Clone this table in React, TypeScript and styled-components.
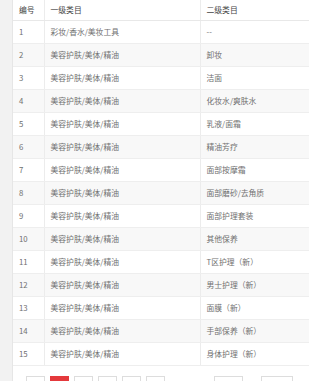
import React from "react";
import styled, { createGlobalStyle } from "styled-components";

const Global = createGlobalStyle`
  html, body { margin: 0; padding: 0; background: #f2f2f2; }
  body { font-family: "Noto Sans CJK SC", "Noto Sans", sans-serif; overflow: hidden; }
`;

const Page = styled.div`
  width: 309px;
  height: 381px;
  display: flex;
  overflow: hidden;
`;

const Panel = styled.div`
  margin-left: 12px;
  flex: 1;
  background: #fff;
  border-left: 1px solid #e6e6e6;
  display: flex;
  flex-direction: column;
`;

const Table = styled.table`
  width: 100%;
  border-collapse: collapse;
  table-layout: fixed;
  font-size: 7.8px;
`;

const HeadCell = styled.th<{ $w?: number }>`
  ${(p) => (p.$w ? `width: ${p.$w}px;` : "")}
  height: 20px;
  padding: 0 0 0 6px;
  text-align: left;
  font-weight: normal;
  color: #444;
  border-bottom: 1px solid #e8e8e8;
  border-right: 1px solid #ececec;
  &:last-child { border-right: none; }
  box-sizing: border-box;
`;

const Row = styled.tr<{ $alt: boolean }>`
  background: ${(p) => (p.$alt ? "#f8f8f8" : "#fff")};
`;

const Cell = styled.td`
  height: 23px;
  padding: 0 0 0 6px;
  color: #707070;
  border-bottom: 1px solid #eeeeee;
  border-right: 1px solid #ececec;
  &:last-child { border-right: none; }
  white-space: nowrap;
  box-sizing: border-box;
`;

const Pager = styled.div`
  display: flex;
  align-items: flex-start;
  padding: 10px 0 0 13px;
  gap: 5px;
`;

const PageBtn = styled.div<{ $active?: boolean; $w?: number }>`
  width: ${(p) => p.$w ?? 19}px;
  height: 16px;
  box-sizing: border-box;
  border: 1px solid ${(p) => (p.$active ? "#e4393c" : "#dddddd")};
  background: ${(p) => (p.$active ? "#e4393c" : "#fff")};
  color: ${(p) => (p.$active ? "#fff" : "#666")};
  font-size: 7px;
  display: flex;
  align-items: center;
  justify-content: center;
`;

const Spacer = styled.div<{ $w: number }>`
  width: ${(p) => p.$w}px;
`;

const rows: [string, string][] = [
  ["彩妆/香水/美妆工具", "--"],
  ["美容护肤/美体/精油", "卸妆"],
  ["美容护肤/美体/精油", "洁面"],
  ["美容护肤/美体/精油", "化妆水/爽肤水"],
  ["美容护肤/美体/精油", "乳液/面霜"],
  ["美容护肤/美体/精油", "精油芳疗"],
  ["美容护肤/美体/精油", "面部按摩霜"],
  ["美容护肤/美体/精油", "面部磨砂/去角质"],
  ["美容护肤/美体/精油", "面部护理套装"],
  ["美容护肤/美体/精油", "其他保养"],
  ["美容护肤/美体/精油", "T区护理（新）"],
  ["美容护肤/美体/精油", "男士护理（新）"],
  ["美容护肤/美体/精油", "面膜（新）"],
  ["美容护肤/美体/精油", "手部保养（新）"],
  ["美容护肤/美体/精油", "身体护理（新）"],
];

export default function App() {
  return (
    <Page>
      <Global />
      <Panel>
        <Table>
          <thead>
            <tr>
              <HeadCell $w={31}>编号</HeadCell>
              <HeadCell $w={156}>一级类目</HeadCell>
              <HeadCell>二级类目</HeadCell>
            </tr>
          </thead>
          <tbody>
            {rows.map(([a, b], i) => (
              <Row key={i} $alt={i % 2 === 1}>
                <Cell>{i + 1}</Cell>
                <Cell>{a}</Cell>
                <Cell>{b}</Cell>
              </Row>
            ))}
          </tbody>
        </Table>
        <Pager>
          <PageBtn />
          <PageBtn $active />
          <PageBtn />
          <PageBtn />
          <PageBtn />
          <PageBtn />
          <Spacer $w={39} />
          <PageBtn $w={29} />
          <Spacer $w={8} />
          <PageBtn $w={32} />
        </Pager>
      </Panel>
    </Page>
  );
}
